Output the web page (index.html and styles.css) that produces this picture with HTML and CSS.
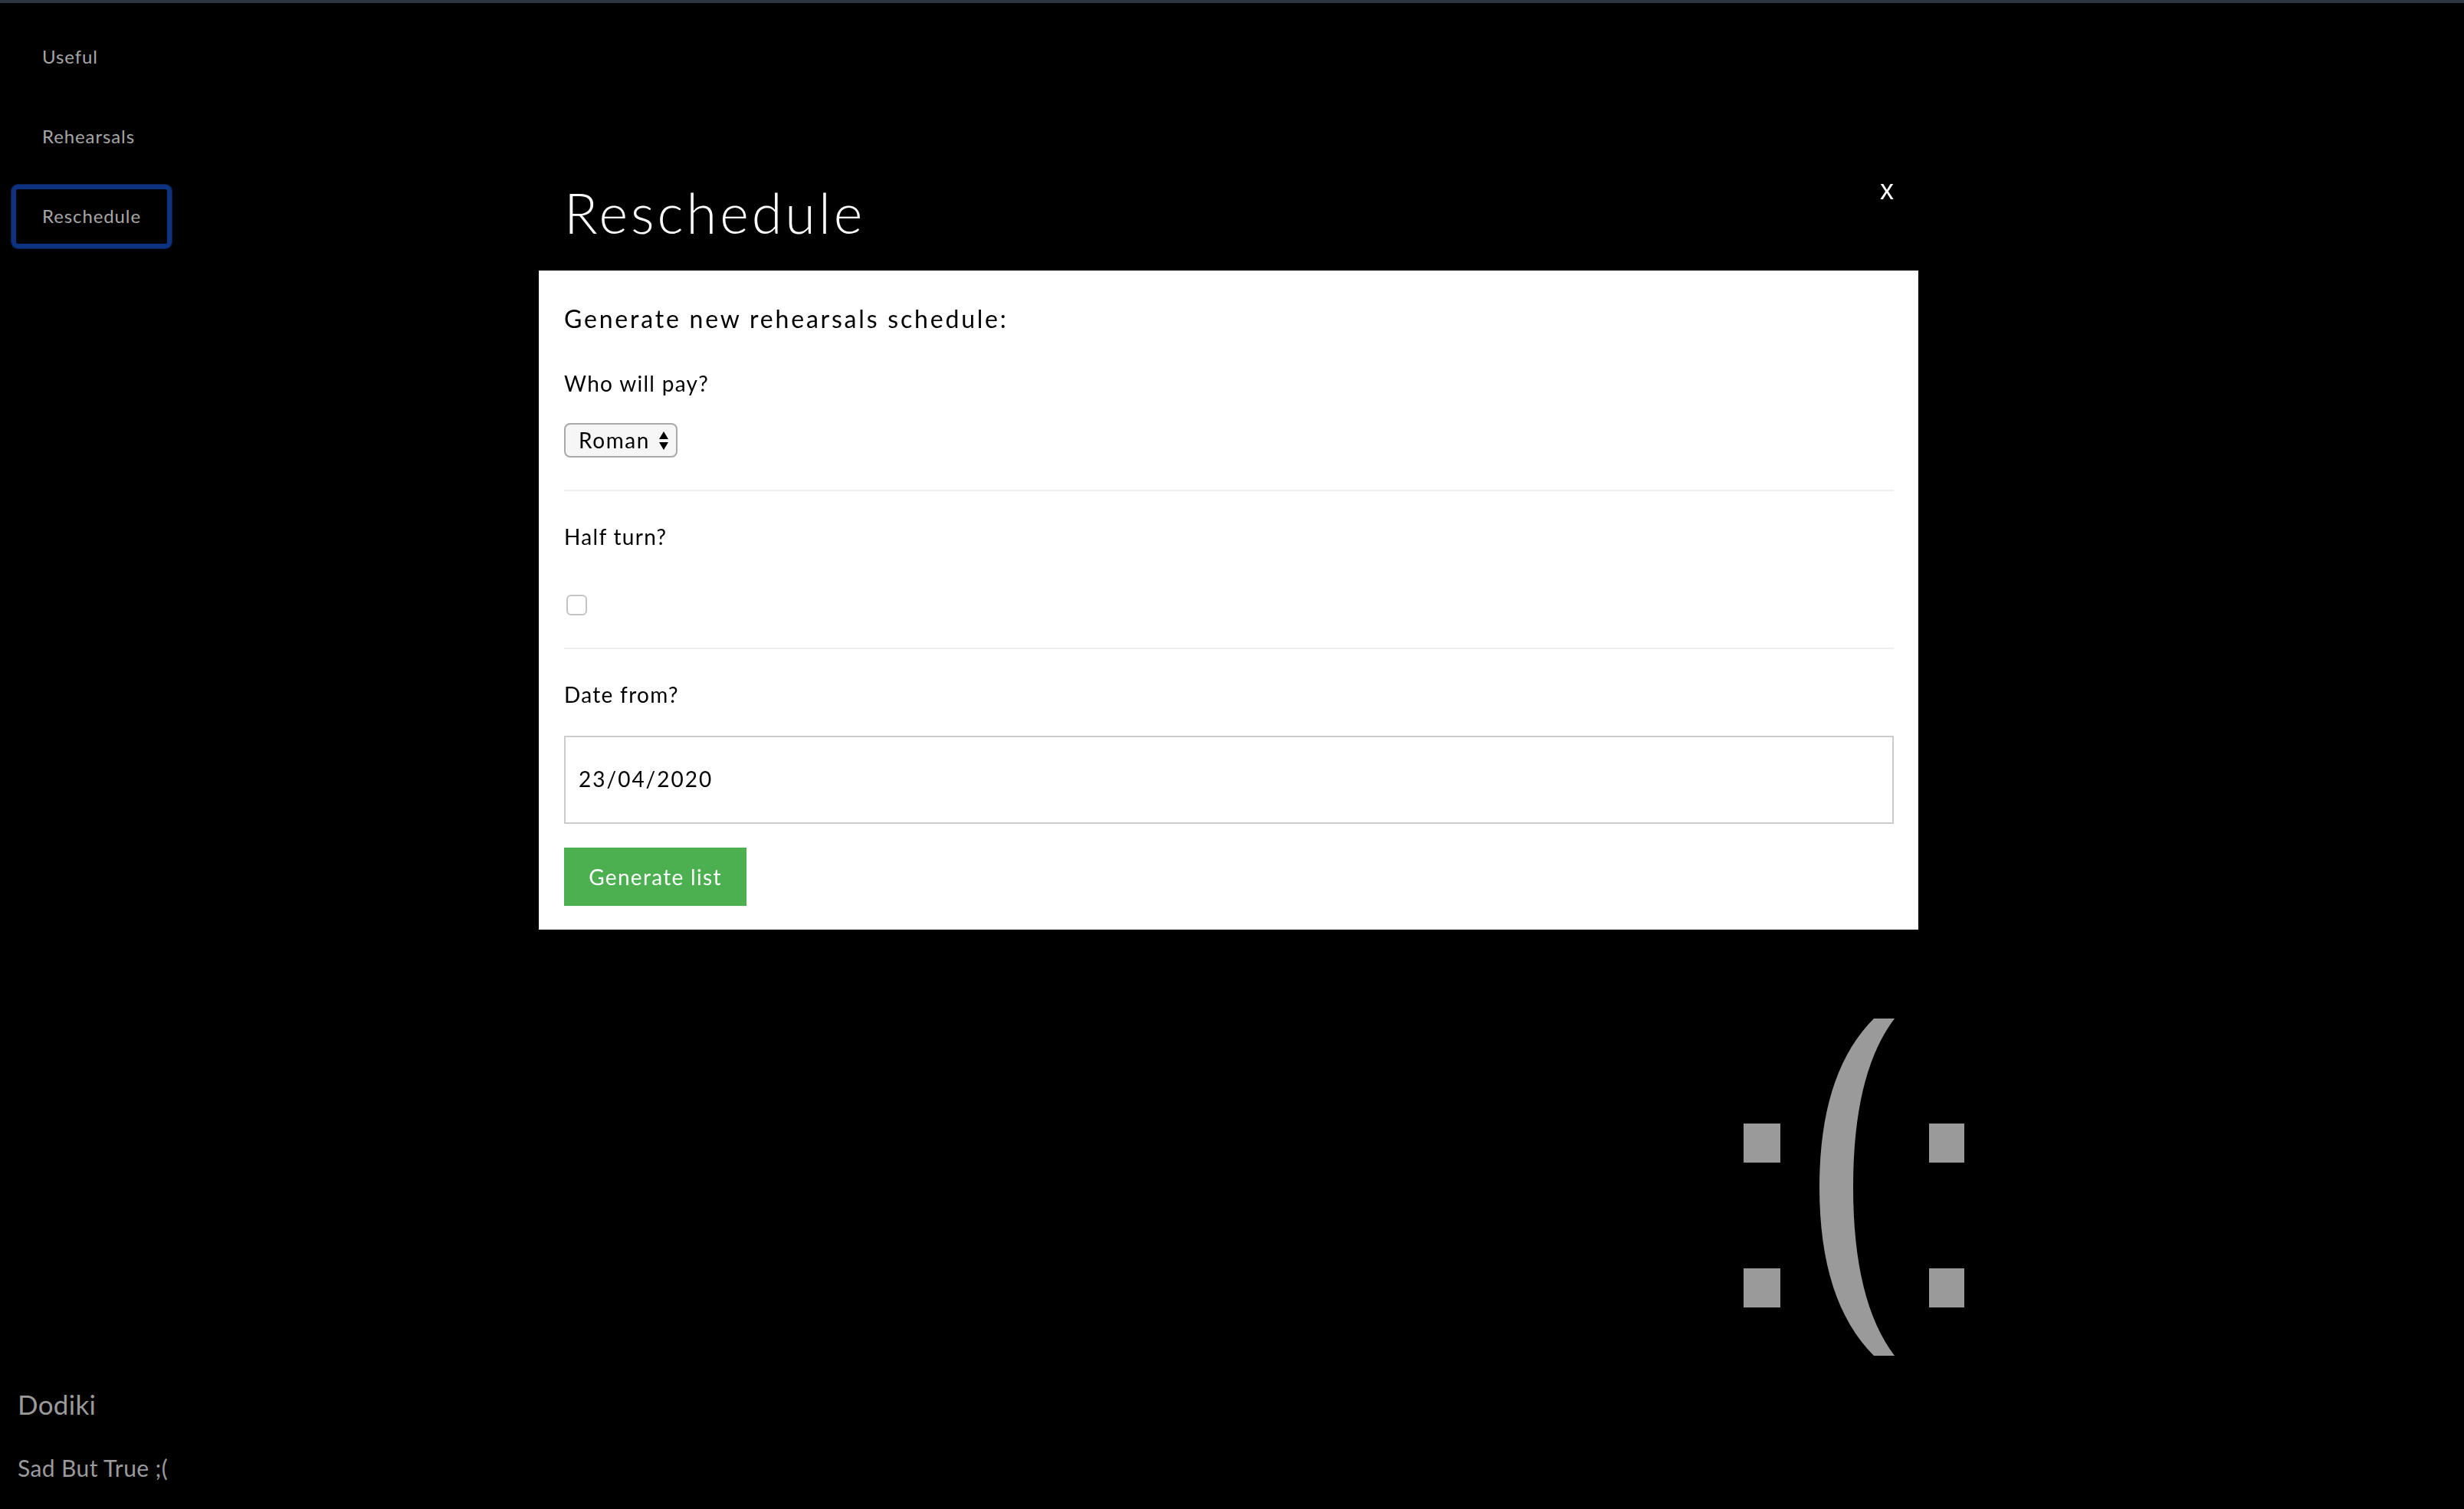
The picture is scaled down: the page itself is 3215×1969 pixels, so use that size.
FILE: index.html
```html
<!DOCTYPE html>
<html lang="en">
<head>
<meta charset="utf-8">
<title>Reschedule</title>
<link rel="stylesheet" href="styles.css">
</head>
<body>
<div class="topbar"></div>
<div class="page">
  <aside class="sidebar">
    <nav class="nav">
      <a class="nav-item">Useful</a>
      <a class="nav-item">Rehearsals</a>
      <a class="nav-item active">Reschedule</a>
    </nav>
    <div class="sidebar-footer">
      <p class="brand">Dodiki</p>
      <p class="tagline">Sad But True ;(</p>
    </div>
  </aside>
  <main class="main">
    <svg class="sad-face" width="288" height="440" viewBox="0 0 288 440" aria-hidden="true">
      <rect x="0" y="137" width="48" height="51" fill="#9a9a9a"/>
      <rect x="0" y="326" width="48" height="51" fill="#9a9a9a"/>
      <rect x="242" y="137" width="46" height="51" fill="#9a9a9a"/>
      <rect x="242" y="326" width="46" height="51" fill="#9a9a9a"/>
      <path d="M170 0 L197 0 Q143 71 143 220 Q143 369 197 440 L170 440 Q99 369 99 220 Q99 71 170 0 Z" fill="#9a9a9a"/>
    </svg>
  </main>
</div>
<div class="overlay">
  <div class="modal">
    <div class="modal-header">
      <h1 class="modal-title">Reschedule</h1>
      <button class="close" type="button">x</button>
    </div>
    <div class="modal-body">
      <p class="intro">Generate new rehearsals schedule:</p>
      <div class="field">
        <p class="label">Who will pay?</p>
        <div class="select"><span>Roman</span>
          <svg class="arrows" width="14" height="24" viewBox="0 0 14 24" aria-hidden="true">
            <path d="M7 0 L13 10 L1 10 Z" fill="#000"/>
            <path d="M1 14 L13 14 L7 24 Z" fill="#000"/>
          </svg>
        </div>
      </div>
      <hr class="divider">
      <div class="field">
        <p class="label">Half turn?</p>
        <div class="checkbox"></div>
      </div>
      <hr class="divider">
      <div class="field">
        <p class="label">Date from?</p>
        <div class="date-input">23/04/2020</div>
      </div>
      <button class="btn-generate" type="button">Generate list</button>
    </div>
  </div>
</div>
</body>
</html>
```

FILE: styles.css
```css
* { box-sizing: border-box; }

html, body {
  margin: 0;
  padding: 0;
  background: #000;
  font-family: Lato, "Open Sans", sans-serif;
  line-height: 1.2;
}

.topbar {
  height: 4px;
  background: #2c3640;
}

.page {
  display: flex;
  height: calc(100vh - 4px);
}

.sidebar {
  width: 300px;
  display: flex;
  flex-direction: column;
  justify-content: space-between;
}

.nav {
  display: flex;
  flex-direction: column;
  align-items: flex-start;
  gap: 21px;
  padding: 29px 0 0 15px;
}

.nav-item {
  display: flex;
  align-items: center;
  height: 83px;
  padding: 0 34px;
  border: 6px solid transparent;
  border-radius: 8px;
  color: #a6a6a6;
  font-size: 24px;
  letter-spacing: 0.9px;
}

.nav-item.active {
  border-color: #0d3280;
  box-shadow: 0 0 0 1px #0a1f4d;
}

.sidebar-footer {
  padding: 0 0 36px 23px;
  color: #9a9a9a;
}

.brand {
  margin: 0 0 44px;
  font-size: 35px;
  letter-spacing: 0.3px;
}

.tagline {
  margin: 0;
  font-size: 30px;
  letter-spacing: 0.4px;
}

.main {
  flex: 1;
  padding: 1325px 0 0 1975px;
}

.sad-face {
  display: block;
}

.overlay {
  position: fixed;
  top: 0;
  left: 0;
  right: 0;
  bottom: 0;
  display: flex;
  justify-content: center;
  align-items: flex-start;
  padding: 234px 9px 0 0;
}

.modal {
  width: 1800px;
}

.modal-header {
  display: flex;
  justify-content: space-between;
  align-items: flex-start;
  padding: 0 32px 33px 33px;
}

.modal-title {
  margin: 0;
  color: #fff;
  font-size: 72px;
  font-weight: 300;
  line-height: 1.2;
  letter-spacing: 4px;
}

.close {
  margin-top: -4px;
  padding: 0;
  border: 0;
  background: none;
  color: #fff;
  font-family: "Liberation Sans", Arial, sans-serif;
  font-size: 36px;
  line-height: 1;
}

.modal-body {
  background: #fff;
  padding: 44px 32px 31px 33px;
  color: #000;
}

.intro {
  margin: 0 0 48px;
  font-size: 32px;
  letter-spacing: 2.8px;
}

.label {
  margin: 0;
  font-size: 28px;
  letter-spacing: 1.3px;
}

.select {
  display: inline-flex;
  align-items: center;
  justify-content: space-between;
  width: 148px;
  height: 45px;
  margin-top: 35px;
  padding: 0 9px 0 17px;
  border: 2px solid #a9a9a9;
  border-radius: 8px;
  background: #f6f6f6;
  font-size: 28px;
  letter-spacing: 1.6px;
  vertical-align: top;
}

.arrows {
  display: block;
}

.divider {
  height: 2px;
  margin: 42px 0 43px;
  border: 0;
  background: #eeeeee;
}

.checkbox {
  width: 27px;
  height: 27px;
  margin: 58px 0 0 3px;
  border: 2px solid #c4c4c4;
  border-radius: 6px;
  background: #fff;
}

.date-input {
  display: flex;
  align-items: center;
  height: 115px;
  margin-top: 36px;
  padding: 0 17px;
  border: 2px solid #cccccc;
  font-size: 28px;
  letter-spacing: 2px;
}

.btn-generate {
  display: block;
  width: 238px;
  height: 76px;
  margin-top: 31px;
  padding: 0;
  border: 0;
  background: #4caf50;
  color: #fff;
  font-family: Lato, "Open Sans", sans-serif;
  font-size: 28px;
  letter-spacing: 1.3px;
}
```
